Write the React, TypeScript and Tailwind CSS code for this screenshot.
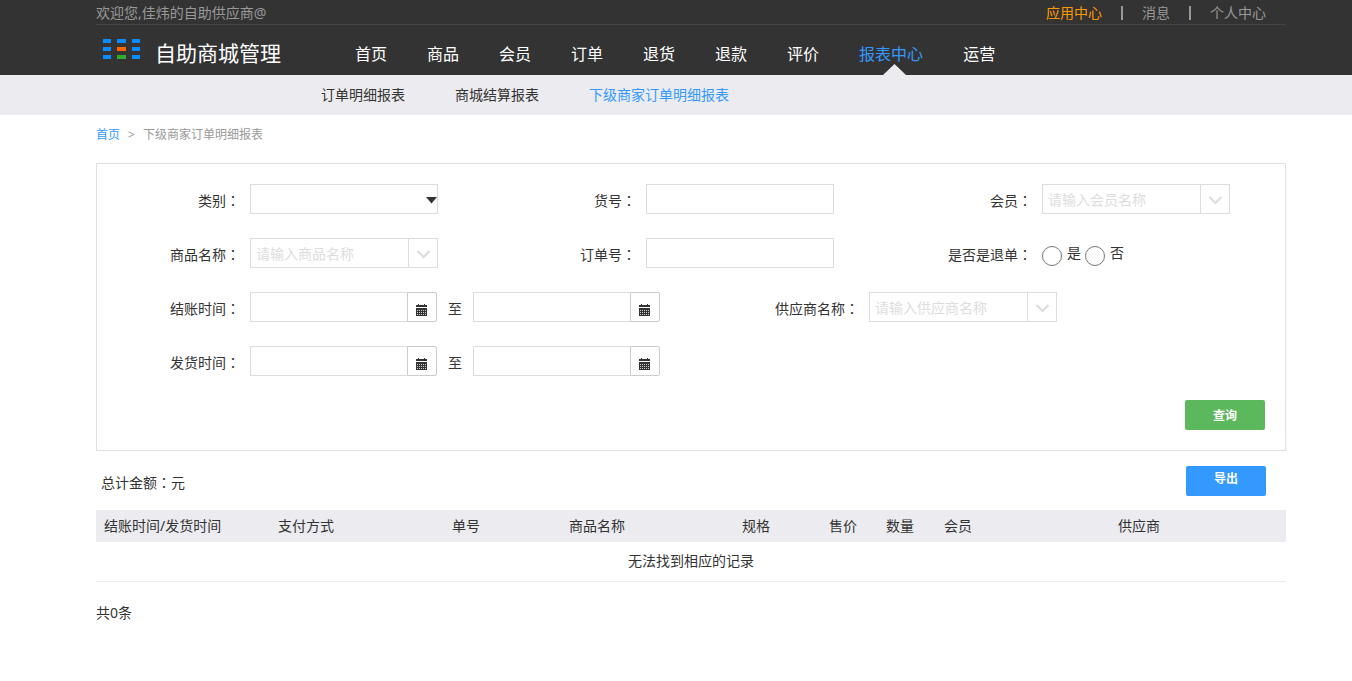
import { useId, useState } from "react";
import type { ReactNode } from "react";

const NAV = ["首页", "商品", "会员", "订单", "退货", "退款", "评价", "报表中心", "运营"];
const SUB_NAV = ["订单明细报表", "商城结算报表", "下级商家订单明细报表"];

const COLUMNS = [
	{ title: "结账时间/发货时间", width: "w-[174px]" },
	{ title: "支付方式", width: "w-[174px]" },
	{ title: "单号", width: "w-[117px]" },
	{ title: "商品名称", width: "w-[173px]" },
	{ title: "规格", width: "w-[87px]" },
	{ title: "售价", width: "w-[57px]" },
	{ title: "数量", width: "w-[58px]" },
	{ title: "会员", width: "w-[174px]" },
	{ title: "供应商", width: "w-[176px]" },
];

function Container({ children }: { children: ReactNode }) {
	return <div className="pr-[66px] pl-24">{children}</div>;
}

function Logo() {
	return (
		<svg width="38" height="21" viewBox="0 0 38 21" shapeRendering="crispEdges" className="shrink-0" aria-hidden="true">
			<g fill="#0a8cff">
				<rect x="0" y="0" width="8" height="4" />
				<rect x="14" y="0" width="9" height="4" />
				<rect x="29" y="0" width="8" height="4" />
				<rect x="0" y="8" width="8" height="4" />
				<rect x="29" y="8" width="8" height="4" />
				<rect x="0" y="16" width="8" height="4" />
				<rect x="29" y="16" width="8" height="4" />
			</g>
			<rect x="14" y="8" width="9" height="4" fill="#ff6400" />
			<rect x="14" y="16" width="9" height="4" fill="#2fab2f" />
		</svg>
	);
}

function CalendarIcon() {
	return (
		<svg width="12" height="12" viewBox="0 0 12 12" shapeRendering="crispEdges" aria-hidden="true">
			<path fill="#333" d="M2 0h1v1h5V0h1v1h2v2H0V1h2zM0 4h11v8H0z" />
			<path
				fill="#ccc"
				d="M1 6h1v1H1zM3 6h1v1H3zM5 6h1v1H5zM7 6h1v1H7zM9 6h1v1H9zM1 8h1v1H1zM3 8h1v1H3zM5 8h1v1H5zM7 8h1v1H7zM9 8h1v1H9zM1 10h1v1H1zM3 10h1v1H3zM5 10h1v1H5zM7 10h1v1H7zM9 10h1v1H9z"
			/>
		</svg>
	);
}

// The TC face centres the full-width colon in its box
function Colon() {
	return <span className="font-['Noto_Sans_CJK_TC',sans-serif] leading-none">：</span>;
}

type FieldProps = {
	label: string;
	htmlFor?: string;
	children: ReactNode;
};

function Field({ label, htmlFor, children }: FieldProps) {
	return (
		<div className="flex h-[30px] gap-[10px]">
			<label htmlFor={htmlFor} className="w-[143px] shrink-0 text-right leading-[34px]">
				{label}
				<Colon />
			</label>
			{children}
		</div>
	);
}

function TextField({ label }: { label: string }) {
	const id = useId();
	return (
		<Field label={label} htmlFor={id}>
			<input id={id} type="text" className="w-[188px] border border-[#ddd] px-[5px] outline-none" />
		</Field>
	);
}

function ComboField({ label, placeholder }: { label: string; placeholder: string }) {
	const id = useId();
	return (
		<Field label={label} htmlFor={id}>
			<div className="flex w-[188px] border border-[#ddd]">
				<input
					id={id}
					type="text"
					placeholder={placeholder}
					className="min-w-0 flex-1 px-[5px] pt-[2px] outline-none placeholder:text-[#ddd]"
				/>
				<button
					type="button"
					aria-label="展开"
					className="flex w-[29px] items-center justify-center border-l border-[#ddd]"
				>
					<svg width="15" height="9" viewBox="0 0 15 9" className="mt-[2px]" aria-hidden="true">
						<path d="M1.5 1l6 6 6-6" fill="none" stroke="#ddd" strokeWidth="2.2" />
					</svg>
				</button>
			</div>
		</Field>
	);
}

function CategoryField() {
	const id = useId();
	return (
		<Field label="类别" htmlFor={id}>
			<div className="relative flex w-[188px]">
				<select id={id} className="w-full appearance-none border border-[#ddd] bg-white px-[5px] outline-none">
					<option value="" />
				</select>
				<svg
					width="11"
					height="7"
					viewBox="0 0 11 7"
					className="pointer-events-none absolute top-[13px] right-[1px]"
					aria-hidden="true"
				>
					<path d="M0 0h11L5.5 6.5z" fill="#333" />
				</svg>
			</div>
		</Field>
	);
}

function DateInput({ id, label }: { id?: string; label: string }) {
	return (
		<div className="flex w-[187px]">
			<input
				id={id}
				type="text"
				aria-label={label}
				className="min-w-0 flex-1 border border-r-0 border-[#ddd] px-[5px] outline-none"
			/>
			<button
				type="button"
				aria-label="选择日期"
				className="flex w-[30px] items-center justify-center rounded-r-[2px] border border-[#ccc] pt-[5px]"
			>
				<CalendarIcon />
			</button>
		</div>
	);
}

function DateRangeField({ label }: { label: string }) {
	const id = useId();
	return (
		<Field label={label} htmlFor={id}>
			<DateInput id={id} label={`${label} 起`} />
			<span className="mx-[1px] leading-[34px]">至</span>
			<DateInput label={`${label} 止`} />
		</Field>
	);
}

function ReturnField() {
	const [value, setValue] = useState("");
	return (
		<Field label="是否是退单">
			<div className="flex gap-1 leading-[30px]">
				{["是", "否"].map((option) => (
					<label key={option} className="flex gap-[5px]">
						<input
							type="radio"
							name="returned"
							checked={value === option}
							onChange={() => setValue(option)}
							className="mt-2 size-5"
						/>
						{option}
					</label>
				))}
			</div>
		</Field>
	);
}

function Header() {
	return (
		<header className="bg-[#333]">
			<Container>
				<div className="flex h-[25px] items-center justify-between border-b border-[#444] pt-[2px] pr-5 text-[#999]">
					<span>欢迎您,佳炜的自助供应商@</span>
					<div className="flex items-center gap-[19px]">
						<a href="#" className="text-[#f90]">
							应用中心
						</a>
						<span className="h-[14px] w-[2px] bg-[#999]" />
						<a href="#">消息</a>
						<span className="h-[14px] w-[2px] bg-[#999]" />
						<a href="#">个人中心</a>
					</div>
				</div>
				<div className="flex h-[50px]">
					<a href="#" className="flex w-[259px] gap-[14px] pt-[14px] pl-[7px] text-[21px] leading-7 text-white">
						<Logo />
						自助商城管理
					</a>
					<nav className="flex gap-10 pt-[9px] text-base leading-10 text-white">
						{NAV.map((item) =>
							item === "报表中心" ? (
								<a key={item} href="#" className="relative text-[#39f]">
									{item}
									<svg width="23" height="11" viewBox="0 0 23 11" className="absolute bottom-0 left-6" aria-hidden="true">
										<path d="M0 11L11.5 0L23 11z" fill="#ecebf0" />
									</svg>
								</a>
							) : (
								<a key={item} href="#">
									{item}
								</a>
							),
						)}
					</nav>
				</div>
			</Container>
		</header>
	);
}

export default function App() {
	return (
		<div className="bg-white font-['Noto_Sans','Noto_Sans_CJK_SC',sans-serif] text-sm text-[#333]">
			<Header />
			<div className="bg-[#ecebf0]">
				<Container>
					<nav className="flex gap-[50px] pl-[225px] leading-10">
						{SUB_NAV.map((item, index) => (
							<a key={item} href="#" className={index === 2 ? "text-[#39f]" : undefined}>
								{item}
							</a>
						))}
					</nav>
				</Container>
			</div>

			<Container>
				<div className="flex h-12 gap-2 text-xs leading-10 text-[#999]">
					<a href="#" className="text-[#39f]">
						首页
					</a>
					<span>&gt;</span>
					<span>下级商家订单明细报表</span>
				</div>

				<form className="flex flex-col gap-6 border border-[#e1e1e1] py-5" onSubmit={(e) => e.preventDefault()}>
					<div className="grid grid-cols-3 gap-y-6">
						<CategoryField />
						<TextField label="货号" />
						<ComboField label="会员" placeholder="请输入会员名称" />
						<ComboField label="商品名称" placeholder="请输入商品名称" />
						<TextField label="订单号" />
						<ReturnField />
					</div>
					<div className="flex gap-14">
						<DateRangeField label="结账时间" />
						<ComboField label="供应商名称" placeholder="请输入供应商名称" />
					</div>
					<DateRangeField label="发货时间" />
					<div className="flex justify-end pr-5">
						<button type="submit" className="h-[30px] w-20 rounded-[2px] bg-[#5cb85c] pt-[2px] text-xs font-bold text-white">
							查询
						</button>
					</div>
				</form>

				<div className="flex items-start justify-between pt-[15px] pr-5 pb-[10px] pl-[5px]">
					<span className="leading-[34px]">
						总计金额
						<Colon />元
					</span>
					<button
						type="button"
						className="h-[30px] w-20 rounded-[2px] bg-[#39f] pb-1 text-xs font-bold text-white"
					>
						导出
					</button>
				</div>

				<table className="w-full table-fixed">
					<thead>
						<tr className="h-8 bg-[#ecebf0]">
							{COLUMNS.map((column) => (
								<th key={column.title} className={`${column.width} px-2 text-left font-normal whitespace-nowrap`}>
									{column.title}
								</th>
							))}
						</tr>
					</thead>
					<tbody>
						<tr className="h-[39px] border-b border-[#eee]">
							<td colSpan={9} className="text-center">
								无法找到相应的记录
							</td>
						</tr>
					</tbody>
				</table>
				<p className="py-5 leading-[22px]">共0条</p>
			</Container>
		</div>
	);
}
